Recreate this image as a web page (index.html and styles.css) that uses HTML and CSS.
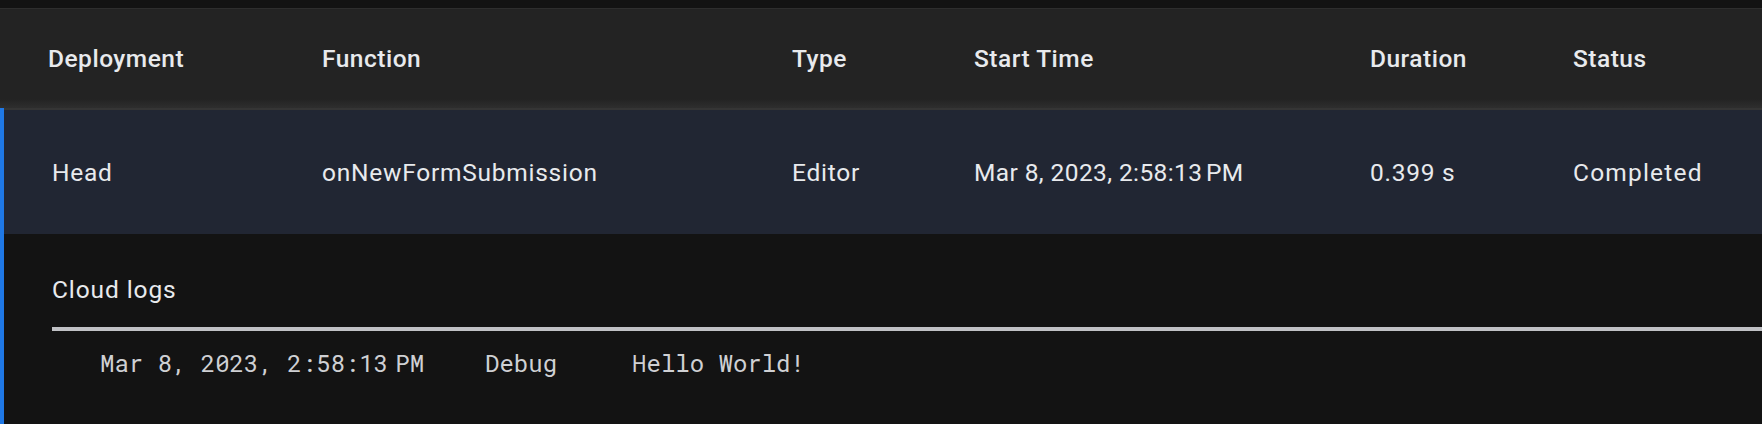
FILE: index.html
```html
<!DOCTYPE html>
<html lang="en">
<head>
<meta charset="utf-8">
<title>Executions</title>
<link rel="stylesheet" href="styles.css">
</head>
<body>
<div class="topband"></div>
<div class="executions">
  <div class="thead">
    <div class="th">Deployment</div>
    <div class="th">Function</div>
    <div class="th">Type</div>
    <div class="th">Start Time</div>
    <div class="th">Duration</div>
    <div class="th">Status</div>
  </div>
  <div class="group">
    <div class="trow">
      <div class="td">Head</div>
      <div class="td">onNewFormSubmission</div>
      <div class="td">Editor</div>
      <div class="td td-time">Mar 8, 2023, 2:58:13&#8239;PM</div>
      <div class="td">0.399 s</div>
      <div class="td td-status">Completed</div>
    </div>
    <div class="details">
      <div class="details-title">Cloud logs</div>
      <div class="divider"></div>
      <div class="log">
        <span class="log-time">Mar 8, 2023, 2:58:13&#8239;PM</span>
        <span class="log-level">Debug</span>
        <span class="log-msg">Hello World!</span>
      </div>
    </div>
  </div>
</div>
</body>
</html>
```
FILE: styles.css
```css
html, body {
  margin: 0;
  padding: 0;
  background: #131313;
  color: #e8eaed;
  font-family: Roboto, "Noto Sans", "Liberation Sans", sans-serif;
  overflow: hidden;
}

.topband {
  height: 8px;
  background: #131313;
}

.thead {
  display: grid;
  grid-template-columns: 274px 470px 182px 396px 203px 1fr;
  align-items: center;
  height: 99px;
  padding-left: 48px;
  border-top: 1px solid #2e2e2e;
  background: linear-gradient(to bottom, #232323 0%, #232323 91%, #2e2e2e 100%);
  font-size: 24.5px;
  font-weight: 500;
  letter-spacing: 0.5px;
}

.group {
  border-left: 4px solid #1f78e6;
}

.trow {
  display: grid;
  grid-template-columns: 270px 470px 182px 396px 203px 1fr;
  align-items: center;
  height: 124px;
  padding-left: 48px;
  border-top: 2px solid #353535;
  background: #212633;
  font-size: 24.5px;
  font-weight: 400;
  letter-spacing: 0.75px;
}

.td-time {
  letter-spacing: 0.4px;
}

.td-status {
  letter-spacing: 1.2px;
}

.details {
  padding: 40px 0 60px 48px;
  background: #131313;
}

.details-title {
  font-size: 24.5px;
  line-height: 32px;
  font-weight: 400;
  letter-spacing: 0.9px;
}

.divider {
  height: 4px;
  margin-top: 21px;
  background: #c0c1c5;
}

.log {
  display: flex;
  margin-top: 16px;
  padding-left: 48px;
  font-family: "Roboto Mono", "DejaVu Sans Mono", "Liberation Mono", monospace;
  font-size: 24px;
  line-height: 32px;
  color: #cfd0d3;
  white-space: pre;
}

.log-time {
  margin-right: 61px;
}

.log-level {
  margin-right: 75px;
}
```
